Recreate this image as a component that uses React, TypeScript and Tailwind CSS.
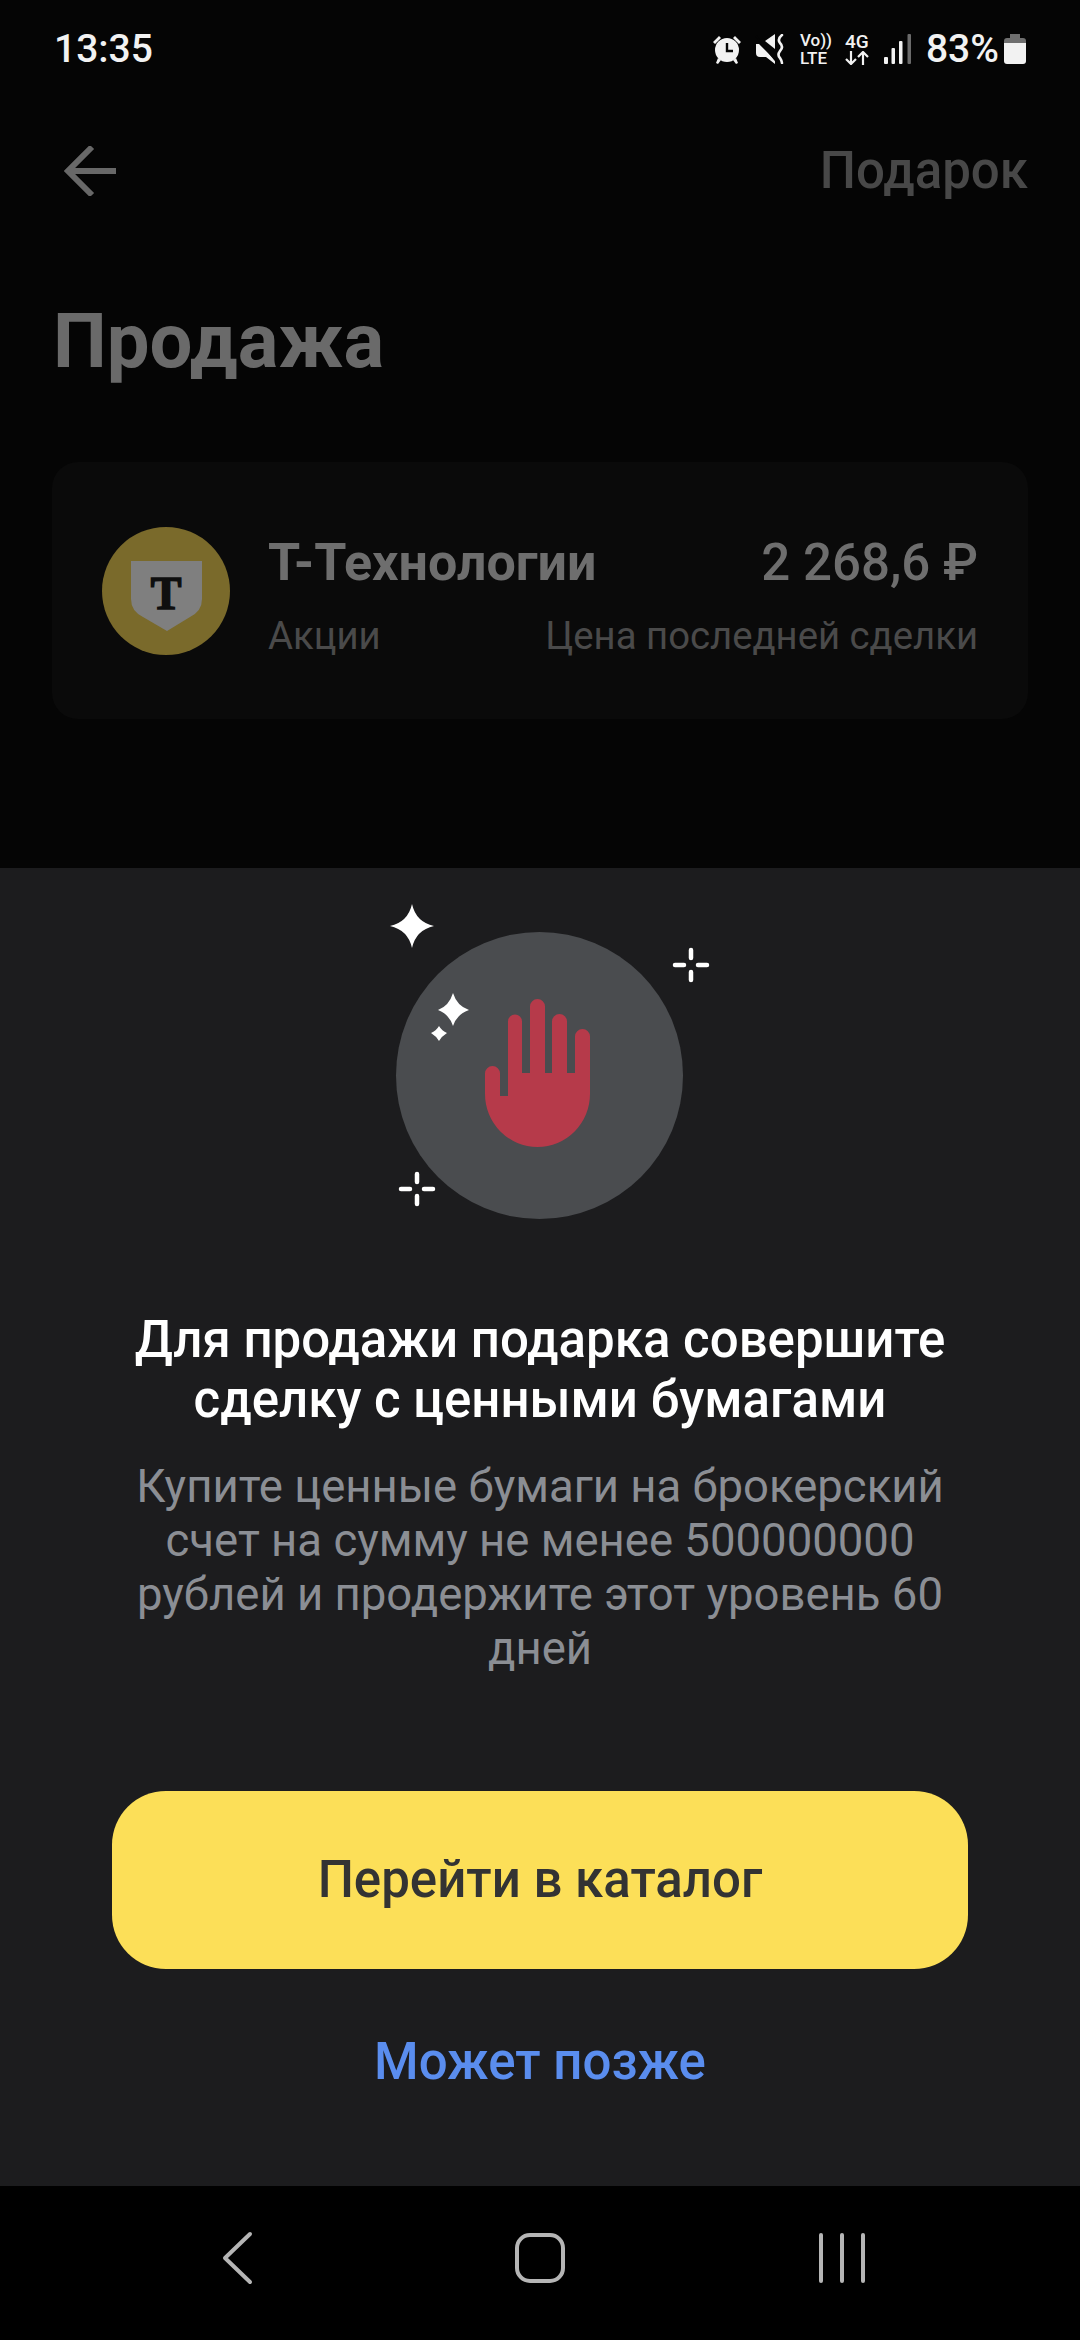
const font = { fontFamily: 'Roboto, sans-serif' };

function Alarm() {
  return (
    <svg width="30" height="30" viewBox="0 0 30 30" fill="#f2f2f2">
      <circle cx="15" cy="16" r="12" />
      <path d="M1 8 L7 2 L9 4 L3 10Z M29 8 L23 2 L21 4 L27 10Z M6 24 L9 26 L6 30 L4 29Z M24 24 L21 26 L24 30 L26 29Z" />
      <path d="M15 9 V17 H21" fill="none" stroke="#050505" strokeWidth="2.4" />
    </svg>
  );
}

function Mute() {
  return (
    <svg width="32" height="30" viewBox="0 0 32 30">
      <path d="M1 10 H4 L20 26 V30 L11 23 H5 Q1 23 1 19Z M10 7 L20 0 V15Z" fill="#f2f2f2" />
      <path d="M1 2 L21 27" stroke="#050505" strokeWidth="2" />
      <path d="M27 1 Q22 5 25 9 Q29 13 25 17 Q22 21 25 24 Q27 27 27 29" fill="none" stroke="#f2f2f2" strokeWidth="2.6" strokeLinecap="round" />
    </svg>
  );
}

function SignalBars() {
  return (
    <svg width="28" height="30" viewBox="0 0 28 30">
      <rect x="0" y="23" width="4" height="7" rx="1" fill="#f2f2f2" />
      <rect x="7.5" y="14" width="3.5" height="16" rx="1" fill="#f2f2f2" />
      <rect x="15" y="7" width="3.5" height="23" rx="1" fill="#f2f2f2" />
      <rect x="23.5" y="0" width="3.5" height="30" rx="1" fill="#6b6b6b" />
    </svg>
  );
}

function DataArrows() {
  return (
    <svg width="24" height="14" viewBox="0 0 24 14" fill="none" stroke="#f2f2f2" strokeWidth="2.2">
      <path d="M6 0 V13 M1 8 L6 13 L11 8 M18 14 V1 M13 6 L18 1 L23 6" />
    </svg>
  );
}

function Battery() {
  return (
    <svg width="22" height="30" viewBox="0 0 22 30">
      <path d="M6 0 H16 V4 H19 Q22 4 22 7 V9 H0 V7 Q0 4 3 4 H6Z" fill="#6f6f6f" />
      <path d="M0 9 H22 V27 Q22 30 19 30 H3 Q0 30 0 27Z" fill="#f2f2f2" />
    </svg>
  );
}

function StatusBar() {
  return (
    <div className="flex items-center justify-between h-[98px] pl-[54px] pr-[54px] text-[#f2f2f2]">
      <span className="text-[39px] font-medium leading-none">13:35</span>
      <div className="flex items-center">
        <Alarm />
        <div className="w-[13px]" />
        <Mute />
        <div className="w-[13px]" />
        <div className="flex flex-col items-start w-[32px] text-[17px] font-medium leading-[18px]">
          <span>Vo))</span>
          <span>LTE</span>
        </div>
        <div className="w-[12px]" />
        <div className="flex flex-col items-center w-[26px] text-[19px] font-medium leading-[18px]">
          <span>4G</span>
          <DataArrows />
        </div>
        <div className="w-[14px]" />
        <SignalBars />
        <div className="w-[14px]" />
        <span className="text-[39px] font-medium leading-none">83%</span>
        <div className="w-[5px]" />
        <Battery />
      </div>
    </div>
  );
}

function Logo() {
  return (
    <svg width="128" height="128" viewBox="0 0 128 128" className="shrink-0">
      <circle cx="64" cy="64" r="64" fill="#7a6a2b" />
      <path d="M29 34 H100 V72 Q100 84 88 90 L65 104 L41 90 Q29 84 29 72Z" fill="#7f7f7f" />
      <text x="64" y="82" textAnchor="middle" fontSize="46" fontWeight="700" fontFamily="Liberation Serif, serif" fill="#0f0f0f" stroke="#0f0f0f" strokeWidth="1.5">T</text>
    </svg>
  );
}

function Illustration() {
  const Sparkle = ({ x, y }: { x: number; y: number }) => (
    <g stroke="#fff" strokeWidth="4.5" strokeLinecap="round" transform={`translate(${x} ${y})`}>
      <path d="M0 -15 V-7 M0 7 V15 M-16 0 H-7 M7 0 H16" />
    </g>
  );
  return (
    <svg width="360" height="360" viewBox="0 0 360 360">
      <circle cx="179.5" cy="196.5" r="143.5" fill="#4a4c4f" />
      <path d="M52 25 Q56 43 74 47 Q56 51 52 69 Q48 51 30 47 Q48 43 52 25Z" fill="#fff" />
      <path d="M93 114 Q97 127 109 131 Q97 135 93 147 Q89 135 78 131 Q89 127 93 114Z" fill="#fff" />
      <path d="M79 147 Q82 152 87 154 Q82 157 79 162 Q76 157 71 154 Q76 152 79 147Z" fill="#fff" />
      <Sparkle x={331} y={86} />
      <Sparkle x={57} y={310} />
      <path
        d="M125 194.5 A7.5 7.5 0 0 1 140 194.5 V217 H148 V142.5 A7 7 0 0 1 162 142.5 V194 H170 V127.5 A7.5 7.5 0 0 1 185 127.5 V194 H192 V142.5 A7.5 7.5 0 0 1 207 142.5 V194 H215 V157.5 A7.5 7.5 0 0 1 230 157.5 V215 A52.5 53 0 0 1 125 215Z"
        fill="#b63a4a"
      />
    </svg>
  );
}

function NavBar() {
  return (
    <div className="flex items-center h-[154px] pl-[221px] bg-black">
      <div className="flex items-center justify-between w-[644px] -mt-[10px]">
        <svg width="40" height="54" viewBox="0 0 40 54" fill="none" stroke="#b5b5b5" strokeWidth="4" strokeLinecap="round" strokeLinejoin="round">
          <path d="M29 3 L4 27 L29 51" />
        </svg>
        <div className="w-[50px] h-[50px] rounded-[15px] border-[4px] border-[#b5b5b5]" />
        <div className="flex gap-[17px]">
          <div className="w-[4px] h-[50px] rounded-full bg-[#b5b5b5]" />
          <div className="w-[4px] h-[50px] rounded-full bg-[#b5b5b5]" />
          <div className="w-[4px] h-[50px] rounded-full bg-[#b5b5b5]" />
        </div>
      </div>
    </div>
  );
}

export default function App() {
  return (
    <div className="flex flex-col w-[1080px] h-[2340px] bg-[#050505] overflow-hidden" style={font}>
      <StatusBar />

      <div className="flex items-center justify-between h-[76px] mt-[35px] pl-[64px] pr-[52px]">
        <svg width="52" height="50" viewBox="0 0 52 50" fill="none" stroke="#686868" strokeWidth="6">
          <path d="M3 25 H52 M28 1 L4 25 L28 49" />
        </svg>
        <span className="text-[51px] font-medium text-[#484848]">Подарок</span>
      </div>

      <h1 className="mt-[90px] pl-[53px] text-[76px] font-bold leading-[84px] text-[#6a6a6a]">Продажа</h1>

      <div className="flex items-center gap-[38px] h-[257px] mt-[79px] mx-[52px] pl-[50px] pr-[50px] rounded-[26px] bg-[#0a0a0a]">
        <Logo />
        <div className="flex flex-col flex-1 gap-[23px] mt-[10px]">
          <div className="flex items-center justify-between text-[52px] font-medium leading-[58px] text-[#6e6e6e]">
            <span className="font-bold">Т-Технологии</span>
            <span className="text-[51px]">2 268,6 ₽</span>
          </div>
          <div className="flex items-center justify-between text-[38.3px] leading-[42px] text-[#4a4a4a]">
            <span>Акции</span>
            <span>Цена последней сделки</span>
          </div>
        </div>
      </div>

      <div className="flex flex-col items-center flex-1 mt-[149px] bg-[#1c1c1e]">
        <div className="mt-[11px]">
          <Illustration />
        </div>
        <h2 className="mt-[71px] w-[850px] text-center text-[51px] font-medium leading-[60px] text-white">
          Для продажи подарка совершите сделку с ценными бумагами
        </h2>
        <p className="mt-[30px] w-[830px] text-center text-[45.5px] leading-[54px] text-[#8b8e94]">
          Купите ценные бумаги на брокерский счет на сумму не менее 500000000 рублей и продержите этот уровень 60 дней
        </p>
        <button className="flex items-center justify-center w-[856px] h-[178px] mt-[115px] rounded-[54px] bg-[#fcdf58] text-[51px] font-medium text-[#333333]">
          Перейти в каталог
        </button>
        <span className="mt-[65px] text-[51px] font-medium leading-[56px] text-[#5a8dee]">Может позже</span>
      </div>

      <NavBar />
    </div>
  );
}
